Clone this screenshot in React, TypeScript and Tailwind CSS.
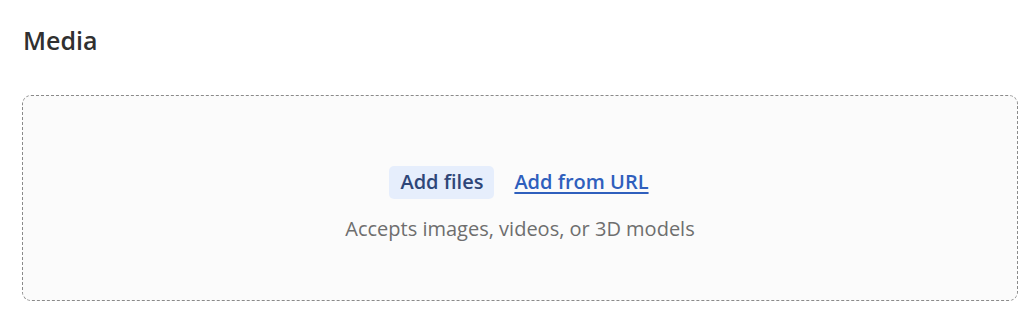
import React from "react";

export default function App() {
  return (
    <div
      className="w-[1033px] h-[317px] bg-white pl-[22px] pr-[15px] pt-[24px]"
      style={{ fontFamily: '"Open Sans", "Noto Sans", sans-serif' }}
    >
      <h2 className="text-[25px] leading-[32px] font-semibold text-[#303030] pl-[1px]">Media</h2>
      <div className="mt-[39px] h-[206px] rounded-[9px] border border-dashed border-[#8a8a8a] bg-[#fbfbfb] flex flex-col items-center justify-center">
        <div className="flex items-center gap-[20px] mt-[12px] ml-[-2px]">
          <button className="h-[33px] px-[11px] rounded-[5px] bg-[#e6eefc] text-[#2e4678] text-[20px] font-semibold leading-none">
            Add files
          </button>
          <a className="text-[20px] font-semibold text-[#2f5fbd] underline underline-offset-[3px] leading-none">
            Add from URL
          </a>
        </div>
        <p className="mt-[16px] text-[20px] text-[#6e6e6e] leading-[28px]">
          Accepts images, videos, or 3D models
        </p>
      </div>
    </div>
  );
}
